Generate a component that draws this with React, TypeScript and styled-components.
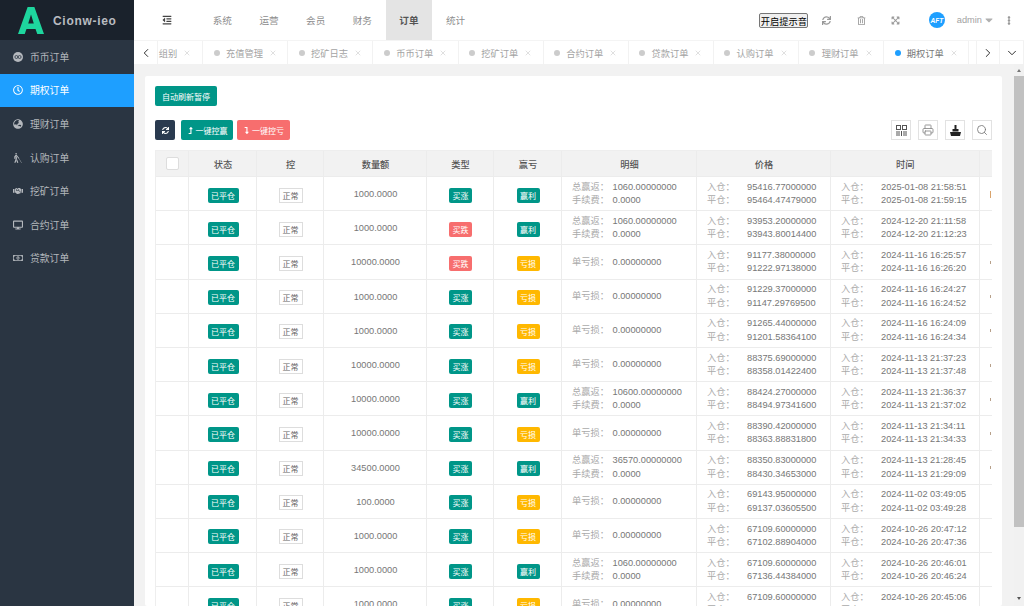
import React from 'react';
import styled, { createGlobalStyle } from 'styled-components';
import {
  FaBlind, FaDesktop, FaExpandArrowsAlt, FaGlobeAsia, FaHandshake, FaLevelDownAlt, FaLevelUpAlt,
  FaOutdent, FaRegClock, FaRegMoneyBillAlt, FaSync, FaRegTrashAlt, FaCaretDown, FaEllipsisV,
} from 'react-icons/fa';
import { ChevronDown, ChevronLeft, ChevronRight, Printer, Search, X } from 'lucide-react';

const Global = createGlobalStyle`
  html, body { margin: 0; padding: 0; height: 100%; overflow: hidden; }
  #root { height: 100%; }
  * { box-sizing: border-box; }
  body { font-family: "Liberation Sans", "Noto Sans CJK SC", sans-serif; font-size: 9.24px; color: #666; }
`;

const Shell = styled.div`display: flex; width: 1024px; height: 606px; overflow: hidden; background: #f2f2f2;`;
const Sidebar = styled.aside`width: 134px; flex: none; background: #2a3542; display: flex; flex-direction: column;`;
const Logo = styled.div`height: 40px; background: #1a222c; display: flex; align-items: center; padding: 1px 0 0 18px; gap: 9px;`;
const LogoName = styled.span`font-size: 12px; font-weight: 700; letter-spacing: 0.7px; color: #b9bcc0;`;
const MenuItem = styled.div<{ $active?: boolean }>`
  height: 33.6px; display: flex; align-items: center; gap: 7px; padding-left: 13px;
  font-size: 9.8px; color: ${p => (p.$active ? '#fff' : '#b4b8bd')};
  background: ${p => (p.$active ? '#1e9fff' : 'transparent')};
  svg { width: 10px; height: 10px; flex: none; }
`;
const Main = styled.div`flex: 1; min-width: 0; display: flex; flex-direction: column;`;
const Header = styled.header`height: 40px; flex: none; background: #fff; display: flex; align-items: stretch;`;
const Fold = styled.div`width: 65px; display: flex; align-items: center; justify-content: center; color: #444; svg { width: 10px; height: 10px; }`;
const NavItem = styled.div<{ $active?: boolean }>`
  width: 46.67px; display: flex; align-items: center; justify-content: center; font-size: 9.6px;
  color: ${p => (p.$active ? '#555' : '#8d8d8d')}; font-weight: ${p => (p.$active ? 700 : 400)};
  background: ${p => (p.$active ? '#e4e4e4' : 'transparent')};
`;
const HeaderRight = styled.div`margin-left: auto; display: flex; align-items: center; padding-right: 11px; color: #999;`;
const SoundButton = styled.button`
  width: 49px; height: 15px; padding: 0; font: 9.24px "Liberation Sans", "Noto Sans CJK SC", sans-serif; color: #000;
  background: #efefef; border: 1px solid #767676; border-radius: 2px; margin-right: 1px; white-space: nowrap;
`;
const HeaderIcon = styled.span`width: 34.5px; display: flex; justify-content: center; svg { width: 9px; height: 9px; }`;
const Avatar = styled.span`
  width: 16px; height: 16px; border-radius: 50%; background: #1e9fff; color: #fff; font-size: 6.5px; font-weight: 700; font-style: italic;
  display: flex; align-items: center; justify-content: center; margin: 0 12px 0 16px;
`;
const UserName = styled.span`color: #a2a2a2; font-size: 9.24px;`;
const Caret = styled.span`display: flex; margin: 0 10px 0 1px; color: #b0b0b0; svg { width: 12px; height: 12px; }`;
const Dots = styled.span`display: flex; color: #999; svg { width: 8px; height: 9px; }`;

const TabBar = styled.nav`height: 24px; flex: none; background: #fff; display: flex; border-top: 1px solid #f4f4f4;`;
const TabArrow = styled.div`width: 24px; flex: none; display: flex; align-items: center; justify-content: center; color: #222; border-right: 1px solid #f2f2f2;`;
const TabArrowRight = styled(TabArrow)`border-left: 1px solid #f2f2f2;`;
const TabStrip = styled.div`width: 818px; flex: none; overflow: hidden; display: flex;`;
const Tab = styled.div<{ $clipped?: boolean }>`
  width: 85.1px; flex: none; display: flex; align-items: center; border-right: 1px solid #f2f2f2; padding-left: 10.5px;
  color: #a3a3a3; margin-left: ${p => (p.$clipped ? '-39.8px' : 0)};
  justify-content: ${p => (p.$clipped ? 'flex-end' : 'flex-start')};
  padding-right: ${p => (p.$clipped ? '11px' : 0)};
`;
const TabDot = styled.i<{ $active?: boolean }>`width: 6px; height: 6px; border-radius: 50%; margin-right: 6.2px; flex: none; background: ${p => (p.$active ? '#1e9fff' : '#ccc')};`;
const TabLabel = styled.span<{ $active?: boolean }>`color: ${p => (p.$active ? '#777' : '#a3a3a3')}; white-space: nowrap;`;
const TabClose = styled.span`display: flex; margin-left: 6px; color: #bbb;`;

const Body = styled.div`flex: 1; min-height: 0; display: flex;`;
const Content = styled.main`flex: 1; min-width: 0; padding: 12px 12px 0 11px; overflow: hidden;`;
const Card = styled.section`background: #fff; border-radius: 2px; padding: 10px; height: 100%; overflow: hidden;`;
const Scrollbar = styled.div`width: 10px; flex: none; display: flex; flex-direction: column; align-items: center; background: #f1f1f1;`;
const ScrollArrow = styled.i<{ $up?: boolean }>`
  flex: none; width: 0; height: 0; border-left: 2.5px solid transparent; border-right: 2.5px solid transparent;
  ${p => (p.$up ? 'border-bottom: 3px solid #777; margin: 5px 0 4px;' : 'border-top: 3px solid #555; margin-top: 70px;')}
`;
const Thumb = styled.div`width: 100%; height: 451px; flex: none; background: #c1c1c1;`;

const Btn = styled.button<{ $bg: string; $w: number }>`
  height: 20px; width: ${p => p.$w}px; padding: 0; border: 0; border-radius: 2px; background: ${p => p.$bg}; color: #fff;
  font: 8px "Liberation Sans", "Noto Sans CJK SC", sans-serif; display: inline-flex; align-items: center; justify-content: center; gap: 2px;
  svg { width: 7px; height: 7px; }
`;
const Toolbar = styled.div`display: flex; margin-top: 14px; margin-bottom: 10px; gap: 6px;`;
const ToolGroup = styled.div`display: flex; gap: 4px;`;
const Tools = styled.div`margin-left: auto; display: flex; gap: 7px;`;
const ToolBtn = styled.div`width: 20px; height: 20px; border: 1px solid #e2e2e2; display: flex; align-items: center; justify-content: center; color: #666;`;

const COLS = '34px 68px 67px 103px 67px 68px 135px 134px 148.5px 60px';
const Table = styled.div`width: 837px; overflow: hidden; border-left: 1px solid #eee;`;
const Row = styled.div<{ $head?: boolean }>`
  display: grid; grid-template-columns: ${COLS}; width: 884px; margin-left: -1px;
  height: ${p => (p.$head ? '27px' : '34.2px')};
  background: ${p => (p.$head ? '#f2f2f2' : '#fff')};
  border-top: ${p => (p.$head ? '1px solid #eee' : 0)};
`;
const Cell = styled.div<{ $left?: boolean; $flush?: boolean }>`
  border-right: 1px solid #ececec; border-bottom: 1px solid #ececec; display: flex; align-items: center;
  justify-content: ${p => (p.$left || p.$flush ? 'flex-start' : 'center')};
  padding-left: ${p => (p.$left ? '10px' : p.$flush ? 0 : '1px')};
  padding-top: 1px; min-width: 0; color: #777; white-space: nowrap;
`;
const HeadCell = styled(Cell)`color: #555; font-weight: 500; padding-top: 0;`;
const Checkbox = styled.i`width: 13px; height: 13px; border: 1px solid #ddd; border-radius: 2px; background: #fff;`;
const Badge = styled.span<{ $c: string }>`
  height: 15px; padding: 0 3.5px; min-width: 23px; border-radius: 2px; background: ${p => p.$c}; color: #fff; display: inline-flex; align-items: center; justify-content: center;
  font-size: 8px; position: relative; top: 1px;
`;
const Plain = styled.span`height: 15px; width: 24px; border: 1px solid #ddd; background: #fff; color: #666; font-size: 8px; display: inline-flex; align-items: center; justify-content: center; position: relative; top: 1px;`;
const Pairs = styled.div`display: grid;`;
const Pair = styled.div<{ $w: number }>`display: grid; grid-template-columns: ${p => p.$w}px auto; line-height: 13.4px;`;
const PairLabel = styled.span`color: #aaa;`;
const PairValue = styled.span`color: #777;`;
const Sliver = styled.i<{ $tall?: boolean }>`
  width: ${p => (p.$tall ? '1.5px' : '1px')}; height: ${p => (p.$tall ? '7px' : '3px')}; margin-left: 10px; background: ${p => (p.$tall ? '#d9a36c' : '#b7a08a')};
`;

const GREEN = '#009688', RED = '#f76e6e', AMBER = '#ffb800';

const menu: [React.ReactNode, string][] = [
  [<svg viewBox="0 0 10 10" key="c"><circle cx="5" cy="5" r="5" fill="currentColor" /><circle cx="3.4" cy="5" r="1.5" fill="none" stroke="#2a3542" strokeWidth=".8" /><circle cx="6.6" cy="5" r="1.5" fill="none" stroke="#2a3542" strokeWidth=".8" /></svg>, '币币订单'],
  [<FaRegClock key="k" />, '期权订单'],
  [<FaGlobeAsia key="g" />, '理财订单'],
  [<FaBlind key="b" />, '认购订单'],
  [<FaHandshake key="h" />, '挖矿订单'],
  [<FaDesktop key="d" />, '合约订单'],
  [<FaRegMoneyBillAlt key="m" />, '贷款订单'],
];
const nav = ['系统', '运营', '会员', '财务', '订单', '统计'];
const tabs = ['组别', '充值管理', '挖矿日志', '币币订单', '挖矿订单', '合约订单', '贷款订单', '认购订单', '理财订单', '期权订单'];

type OrderRow = {
  amount: string; type: string; win: boolean; total?: string;
  open: string; close: string; opened: string; closed: string; mark?: boolean;
};
const row = (
  amount: string, type: string, total: string, open: string, close: string, opened: string, closed: string, mark: boolean,
): OrderRow => ({ amount, type, win: total !== '', total, open, close, opened, closed, mark });

const rows: OrderRow[] = [
  row('1000.0000', '买涨', '1060.00000000', '95416.77000000', '95464.47479000', '2025-01-08 21:58:51', '2025-01-08 21:59:15', true),
  row('1000.0000', '买跌', '1060.00000000', '93953.20000000', '93943.80014400', '2024-12-20 21:11:58', '2024-12-20 21:12:23', false),
  row('10000.0000', '买跌', '', '91177.38000000', '91222.97138000', '2024-11-16 16:25:57', '2024-11-16 16:26:20', true),
  row('1000.0000', '买涨', '', '91229.37000000', '91147.29769500', '2024-11-16 16:24:27', '2024-11-16 16:24:52', true),
  row('1000.0000', '买涨', '', '91265.44000000', '91201.58364100', '2024-11-16 16:24:09', '2024-11-16 16:24:34', true),
  row('10000.0000', '买涨', '', '88375.69000000', '88358.01422400', '2024-11-13 21:37:23', '2024-11-13 21:37:48', true),
  row('10000.0000', '买涨', '10600.00000000', '88424.27000000', '88494.97341600', '2024-11-13 21:36:37', '2024-11-13 21:37:02', true),
  row('10000.0000', '买涨', '', '88390.42000000', '88363.88831800', '2024-11-13 21:34:11', '2024-11-13 21:34:33', true),
  row('34500.0000', '买涨', '36570.00000000', '88350.83000000', '88430.34653000', '2024-11-13 21:28:45', '2024-11-13 21:29:09', true),
  row('100.0000', '买涨', '', '69143.95000000', '69137.03605500', '2024-11-02 03:49:05', '2024-11-02 03:49:28', false),
  row('1000.0000', '买涨', '', '67109.60000000', '67102.88904000', '2024-10-26 20:47:12', '2024-10-26 20:47:36', false),
  row('1000.0000', '买涨', '1060.00000000', '67109.60000000', '67136.44384000', '2024-10-26 20:46:01', '2024-10-26 20:46:24', false),
  row('1000.0000', '买涨', '', '67109.60000000', '67088.12000000', '2024-10-26 20:45:06', '2024-10-26 20:45:30', false),
];
const heads = ['状态', '控', '数量额', '类型', '赢亏', '明细', '价格', '时间'];

const PairBlock = ({ w, a, b, la, lb }: { w: number; a: string; b: string; la: string; lb: string }) => (
  <Pairs>
    <Pair $w={w}><PairLabel>{la}</PairLabel><PairValue>{a}</PairValue></Pair>
    <Pair $w={w}><PairLabel>{lb}</PairLabel><PairValue>{b}</PairValue></Pair>
  </Pairs>
);

export default function App() {
  return (
    <Shell>
      <Global />
      <Sidebar>
        <Logo>
          <svg width="26" height="27" viewBox="0 0 27 27" preserveAspectRatio="none">
            <path d="M10 0h7l10 27h-7l-1.800-5H8.800L7 27H0L10 0zm3.500 7.500L10.600 16.600h5.800L13.500 7.500z" fill="#1ed69e" fillRule="evenodd" />
          </svg>
          <LogoName>Cionw-ieo</LogoName>
        </Logo>
        {menu.map(([icon, label], i) => (
          <MenuItem key={label} $active={i === 1}>{icon}<span>{label}</span></MenuItem>
        ))}
      </Sidebar>
      <Main>
        <Header>
          <Fold><FaOutdent /></Fold>
          {nav.map(n => <NavItem key={n} $active={n === '订单'}>{n}</NavItem>)}
          <HeaderRight>
            <SoundButton>开启提示音</SoundButton>
            <HeaderIcon><FaSync /></HeaderIcon>
            <HeaderIcon><FaRegTrashAlt /></HeaderIcon>
            <HeaderIcon><FaExpandArrowsAlt /></HeaderIcon>
            <Avatar>AFT</Avatar>
            <UserName>admin</UserName>
            <Caret><FaCaretDown /></Caret>
            <Dots><FaEllipsisV /></Dots>
          </HeaderRight>
        </Header>
        <TabBar>
          <TabArrow><ChevronLeft size={14} strokeWidth={1.6} /></TabArrow>
          <TabStrip>
            {tabs.map((t, i) => (
              <Tab key={t} $clipped={i === 0}>
                {i > 0 && <TabDot $active={i === 9} />}
                <TabLabel $active={i === 9}>{t}</TabLabel>
                <TabClose><X size={8} strokeWidth={1.4} /></TabClose>
              </Tab>
            ))}
          </TabStrip>
          <TabArrowRight><ChevronRight size={14} strokeWidth={1.6} /></TabArrowRight>
          <TabArrow><ChevronDown size={14} strokeWidth={1.6} /></TabArrow>
        </TabBar>
        <Body>
          <Content>
            <Card>
              <Btn $bg={GREEN} $w={62}>自动刷新暂停</Btn>
              <Toolbar>
                <Btn $bg="#2a3a4f" $w={20}><FaSync /></Btn>
                <ToolGroup>
                  <Btn $bg={GREEN} $w={52}><FaLevelUpAlt />一键控赢</Btn>
                  <Btn $bg={RED} $w={53}><FaLevelDownAlt />一键控亏</Btn>
                </ToolGroup>
                <Tools>
                  <ToolBtn>
                    <svg width="11" height="11" viewBox="0 0 11 11" fill="none" stroke="#555" strokeWidth="1">
                      <rect x="0.500" y="0.500" width="4" height="4" /><rect x="6.500" y="0.500" width="4" height="4" />
                      <path d="M1 6v5M3 6v5M5.500 6v5M8 6v5M10 6v5" />
                    </svg>
                  </ToolBtn>
                  <ToolBtn><Printer size={12} strokeWidth={1.7} color="#888" /></ToolBtn>
                  <ToolBtn>
                    <svg width="11" height="11" viewBox="0 0 11 11">
                      <path d="M0 7h11l-1 4H1zM2.500 4h6v2.500h-6zM4.500 0h2v4h-2z" fill="#222" />
                    </svg>
                  </ToolBtn>
                  <ToolBtn><Search size={12} strokeWidth={1.7} color="#777" /></ToolBtn>
                </Tools>
              </Toolbar>
              <Table>
                <Row $head>
                  <HeadCell><Checkbox /></HeadCell>
                  {heads.map(h => <HeadCell key={h}>{h}</HeadCell>)}
                  <HeadCell />
                </Row>
                {rows.map((r, i) => (
                  <Row key={i}>
                    <Cell />
                    <Cell><Badge $c={GREEN}>已平仓</Badge></Cell>
                    <Cell><Plain>正常</Plain></Cell>
                    <Cell>{r.amount}</Cell>
                    <Cell><Badge $c={r.type === '买涨' ? GREEN : RED}>{r.type}</Badge></Cell>
                    <Cell><Badge $c={r.win ? GREEN : AMBER}>{r.win ? '赢利' : '亏损'}</Badge></Cell>
                    <Cell $left>
                      {r.win
                        ? <PairBlock w={40.5} la="总赢返：" lb="手续费：" a={r.total ?? ''} b="0.0000" />
                        : <Pair $w={40.5}><PairLabel>单亏损：</PairLabel><PairValue>0.00000000</PairValue></Pair>}
                    </Cell>
                    <Cell $left><PairBlock w={40} la="入仓：" lb="平仓：" a={r.open} b={r.close} /></Cell>
                    <Cell $left><PairBlock w={40} la="入仓：" lb="平仓：" a={r.opened} b={r.closed} /></Cell>
                    <Cell $flush>{r.mark && <Sliver $tall={i === 0} />}</Cell>
                  </Row>
                ))}
              </Table>
            </Card>
          </Content>
          <Scrollbar>
            <ScrollArrow $up />
            <Thumb />
            <ScrollArrow />
          </Scrollbar>
        </Body>
      </Main>
    </Shell>
  );
}
